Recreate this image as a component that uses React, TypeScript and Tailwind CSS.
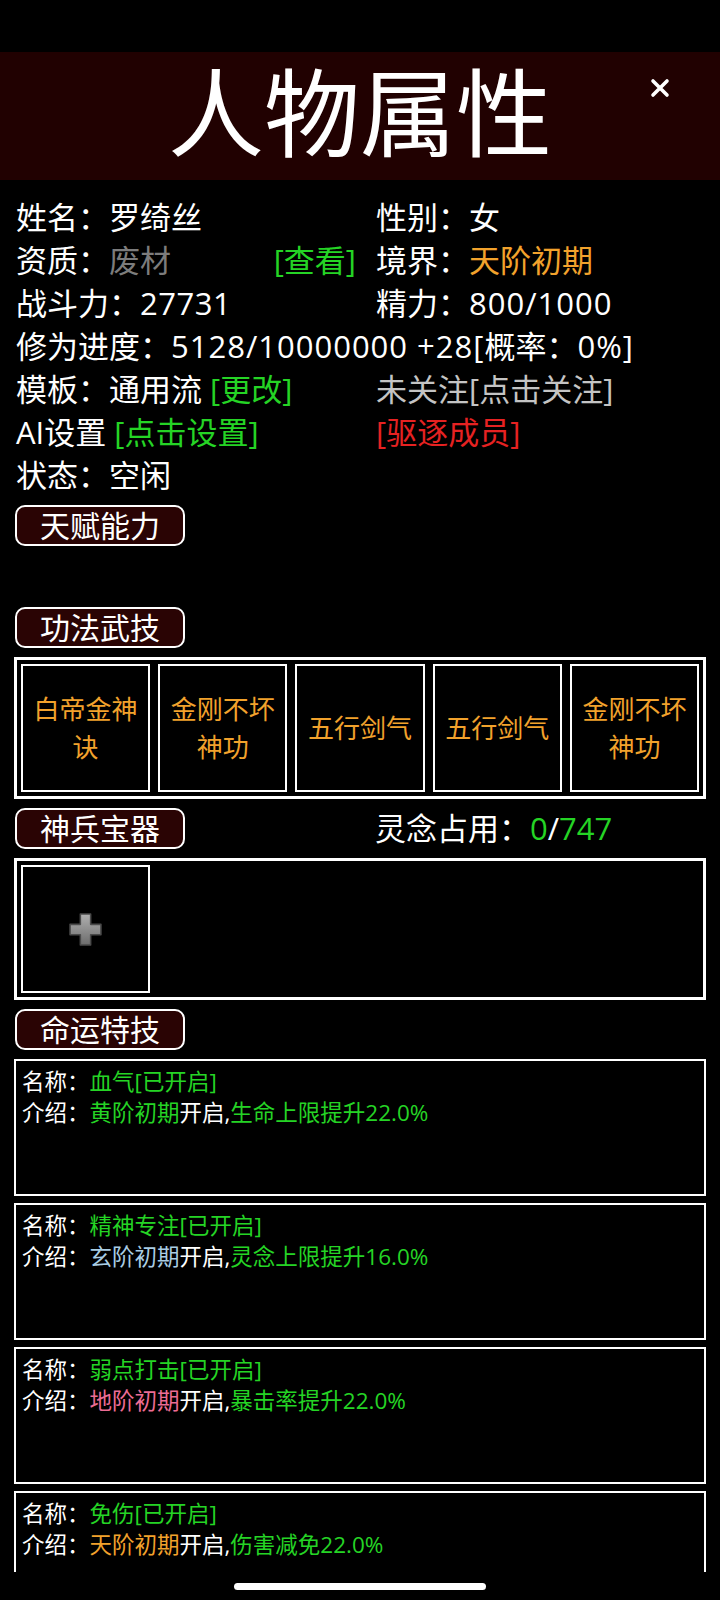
import { ReactNode } from "react";

const skills = ["白帝金神诀", "金刚不坏神功", "五行剑气", "五行剑气", "金刚不坏神功"];

const fates = [
  { name: "血气", tier: "黄阶初期", tierColor: "text-[#25d425]", effect: "生命上限提升22.0%" },
  { name: "精神专注", tier: "玄阶初期", tierColor: "text-[#a9cde4]", effect: "灵念上限提升16.0%" },
  { name: "弱点打击", tier: "地阶初期", tierColor: "text-[#ec6c94]", effect: "暴击率提升22.0%" },
  { name: "免伤", tier: "天阶初期", tierColor: "text-[#f2a22c]", effect: "伤害减免22.0%" },
];

function SectionTag({ label }: { label: string }) {
  return (
    <div className="ml-px flex h-[41px] w-[170px] items-center justify-center rounded-[10px] border-2 border-white bg-[#2a0404] text-[30px] leading-none text-white">
      {label}
    </div>
  );
}

function Row({ left, right }: { left: ReactNode; right?: ReactNode }) {
  return (
    <div className="flex h-[43px] items-center">
      <div className="flex w-[346px] items-center justify-between pl-[2px]">{left}</div>
      <div className="pl-4">{right}</div>
    </div>
  );
}

function PlusIcon() {
  return (
    <svg width="35" height="35" viewBox="0 0 34 34">
      <defs>
        <linearGradient id="plusFill" x1="0" y1="0" x2="0" y2="1">
          <stop offset="0" stopColor="#b0b0b0" />
          <stop offset="1" stopColor="#6c6c6c" />
        </linearGradient>
      </defs>
      <path
        d="M12 2h10v10h10v10H22v10H12V22H2V12h10z"
        fill="url(#plusFill)"
        stroke="#4a4a4a"
        strokeWidth="1.5"
        strokeLinejoin="round"
      />
    </svg>
  );
}

export default function App() {
  return (
    <div className="w-[720px] bg-black font-['Open_Sans','Noto_Sans_CJK_SC',sans-serif] text-white">
      <div className="h-[1572px] overflow-hidden">
        {/* status bar */}
        <div className="h-[52px]" />

        {/* title */}
        <div className="relative flex h-[128px] items-center justify-center bg-[#210101] pb-[8px]">
          <span className="text-[96px] leading-none">人物属性</span>
          <svg
            className="absolute right-[50px] top-[26px]"
            width="20"
            height="20"
            viewBox="0 0 20 20"
          >
            <path d="M3 3L17 17M17 3L3 17" stroke="white" strokeWidth="3.6" strokeLinecap="round" />
          </svg>
        </div>

        <div className="px-[14px]">
          {/* basic info */}
          <div className="pt-[16px] text-[31px] leading-[43px]">
            <Row left={<span>姓名：罗绮丝</span>} right={<span>性别：女</span>} />
            <Row
              left={
                <>
                  <span>
                    资质：<span className="text-[#7c7c7c]">废材</span>
                  </span>
                  <span className="pr-[4px] text-[#25d425]">[查看]</span>
                </>
              }
              right={
                <span>
                  境界：<span className="text-[#f2a22c]">天阶初期</span>
                </span>
              }
            />
            <Row
              left={
                <span>
                  战斗力：<span className="tracking-[0.5px]">27731</span>
                </span>
              }
              right={
                <span>
                  精力：<span className="tracking-[1px]">800/1000</span>
                </span>
              }
            />
            <div className="flex h-[43px] items-center whitespace-nowrap pl-[2px]">
              修为进度：<span className="tracking-[1px]">5128/10000000 +28[</span>概率：
              <span className="tracking-[1px]">0%]</span>
            </div>
            <Row
              left={
                <span>
                  模板：通用流 <span className="text-[#25d425]">[更改]</span>
                </span>
              }
              right={<span className="text-[#c4c4c4]">未关注[点击关注]</span>}
            />
            <Row
              left={
                <span>
                  AI设置 <span className="text-[#25d425]">[点击设置]</span>
                </span>
              }
              right={<span className="text-[#e62222]">[驱逐成员]</span>}
            />
            <Row left={<span>状态：空闲</span>} />
          </div>

          {/* talents */}
          <div className="mt-2">
            <SectionTag label="天赋能力" />
            <div className="h-[61px]" />
          </div>

          {/* martial skills */}
          <SectionTag label="功法武技" />
          <div className="mt-[9px] grid grid-cols-5 gap-2 border-[3px] border-white p-[4px]">
            {skills.map((s, i) => (
              <div
                key={i}
                className="flex h-[128px] items-center justify-center border-2 border-white px-[8px] text-center text-[26px] leading-[38px] text-[#f2a22c]"
              >
                {s}
              </div>
            ))}
          </div>

          {/* treasures */}
          <div className="mt-[9px] flex items-center">
            <div className="w-[346px]">
              <SectionTag label="神兵宝器" />
            </div>
            <div className="pl-[15px] text-[31px] leading-none">
              灵念占用：<span className="text-[#25d425]">0</span>/
              <span className="text-[#25d425]">747</span>
            </div>
          </div>
          <div className="mt-[9px] flex border-[3px] border-white p-[4px]">
            <div className="flex h-[128px] w-[129px] items-center justify-center border-2 border-white">
              <PlusIcon />
            </div>
          </div>

          {/* fate skills */}
          <div className="mt-[9px]">
            <SectionTag label="命运特技" />
          </div>
          <div className="mt-[9px] flex flex-col gap-[7px]">
            {fates.map((f) => (
              <div
                key={f.name}
                className="h-[137px] border-2 border-white px-[6px] pt-[5px] text-[22.5px] leading-[31px]"
              >
                <div>
                  名称：<span className="text-[#25d425]">{f.name}[已开启]</span>
                </div>
                <div className="whitespace-nowrap">
                  介绍：<span className={f.tierColor}>{f.tier}</span>开启,
                  <span className="text-[#25d425]">{f.effect}</span>
                </div>
              </div>
            ))}
          </div>
        </div>
      </div>

      {/* home indicator */}
      <div className="flex h-[28px] items-start justify-center pt-[11px]">
        <div className="h-[7px] w-[252px] rounded-full bg-white" />
      </div>
    </div>
  );
}
